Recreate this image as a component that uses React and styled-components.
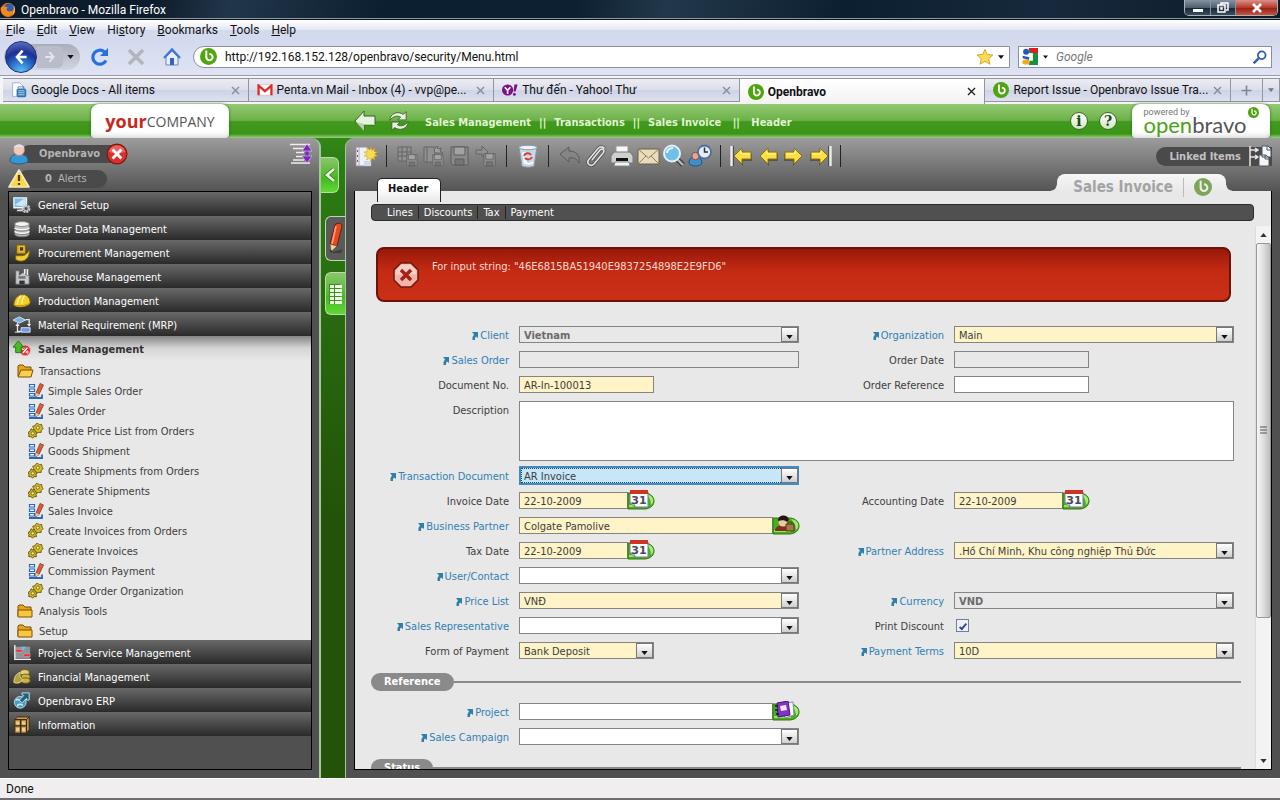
import React from "react"
import styled, { createGlobalStyle, css } from "styled-components"

const uiFont = `Roboto, "Open Sans", sans-serif`
const brandFont = `"Open Sans", "Noto Sans", sans-serif`
const appFont = `"DejaVu Sans Condensed", "DejaVu Sans", "Noto Sans", sans-serif`

const GlobalStyle = createGlobalStyle`
  *, *::before, *::after { box-sizing: border-box; }
  body { margin: 0; }
  button { padding: 0; border: 0; background: none; font: inherit; color: inherit; }
  a { color: inherit; text-decoration: none; }
  input, select, textarea { margin: 0; font: inherit; color: inherit; border-radius: 0; }
  ul { list-style: none; margin: 0; padding: 0; }
  h1, h2 { margin: 0; font-size: inherit; }
  svg { display: block; flex: none; }
`

/* ---------- icons ---------- */

const Svg = ({ size = 20, w, h, box = "0 0 20 20", children }) =>
  <svg width={w || size} height={h || size} viewBox={box} fill="none" aria-hidden="true">
    {children}
  </svg>

const BravoMark = ({ size, color = "#4fa50e", ink = "#fff" }) =>
  <Svg size={size}>
    <circle cx="10" cy="10" r="10" fill={color} />
    <path d="M7.400 3v8" stroke={ink} strokeWidth="2.300" />
    <path d="M7.400 10.600a3.700 3.700 0 1 0 3.700-3.600" stroke={ink} strokeWidth="2.300" />
  </Svg>

const FirefoxIcon = () =>
  <Svg size={16}>
    <circle cx="10" cy="10" r="9" fill="#e66a12" />
    <circle cx="11" cy="8" r="6" fill="#2d5fb4" />
    <path d="M1 7c2-2 4-2 6-1 3 0 3 2 1 3 1 3 5 4 9 1-1 6-6 9-11 7C2 15 0 11 1 7Z" fill="#f08a1c" />
    <path d="M17 4c3 4 2 10-2 13 2-4 3-8 2-13Z" fill="#f9c338" />
  </Svg>

const ReloadIcon = () =>
  <Svg>
    <path d="M16 13.500A7 7 0 1 1 14.500 5" stroke="#2670e0" strokeWidth="3.200" />
    <path d="M18 1v8h-8Z" fill="#2670e0" />
  </Svg>

const StopIcon = () =>
  <Svg>
    <path d="m3 3 14 14M17 3 3 17" stroke="#b3b5bd" strokeWidth="3.600" />
  </Svg>

const HomeIcon = () =>
  <Svg>
    <path d="M4 10v8h12v-8l-6-6Z" fill="#e6eefb" stroke="#6f88b6" />
    <path d="m2 11 8-8.500 8 8.500" stroke="#3e78dd" strokeWidth="2.400" />
    <path d="M8 11h4v7H8Z" fill="#3564ba" />
  </Svg>

const StarIcon = () =>
  <Svg size={18}>
    <path d="m10 1.500 2.600 5.700 6.100.6-4.600 4.100 1.400 6.100L10 14.800 4.500 18l1.400-6.100L1.300 7.800l6.100-.6Z" fill="#fbdc55" stroke="#d69b1e" />
  </Svg>

const GoogleIcon = () =>
  <Svg size={17}>
    <rect x="9" width="11" height="20" fill="#18913d" />
    <path d="M9 0h11v6h-8Z" fill="#df1f1f" />
    <path d="M0 0h9v20H0Z" fill="#fff" />
    <path d="M8 6h6v9H8Z" fill="#fff" />
    <circle cx="6" cy="4.500" r="3.500" fill="#2456c4" />
    <path d="m2 9 8 2-1 3-7-2Z" fill="#2456c4" />
    <ellipse cx="6" cy="16.500" rx="4.500" ry="3" fill="#f2ab1d" />
  </Svg>

const SearchIcon = () =>
  <Svg size={14}>
    <circle cx="12.500" cy="7.500" r="5.500" stroke="#2b62a8" strokeWidth="2.600" />
    <path d="m8 12-7 7" stroke="#2b62a8" strokeWidth="3.400" />
  </Svg>

const DocsIcon = () =>
  <Svg size={16}>
    <path d="M2 1h9l4 4v13H2Z" fill="#fff" stroke="#8fa9c6" />
    <rect x="7" y="8" width="12" height="11" rx="2" fill="#2f74b0" />
    <path d="M9 11h8M9 13.500h8M9 16h8" stroke="#d7e8f7" />
    <path d="M9 8V6h7v2" stroke="#2f74b0" />
  </Svg>

const GmailIcon = () =>
  <Svg w={16} h={12} box="0 0 20 15">
    <rect x="1" y="1" width="18" height="13" fill="#fff" stroke="#d9bcbc" />
    <path d="M2 14V2l8 7 8-7v12" stroke="#dd2b2b" strokeWidth="2.800" />
  </Svg>

const YahooIcon = () =>
  <Svg size={16}>
    <circle cx="7" cy="10" r="7" fill="#7b1082" />
    <path d="m3.500 6.500 3.500 4 3.500-4M7 10.500v4.500" stroke="#fff" strokeWidth="2" />
    <path d="M15.500 3h4l-2.500 9h-2.500Z" fill="#7b1082" />
    <circle cx="15.500" cy="15.500" r="1.800" fill="#7b1082" />
  </Svg>

const CloseIcon = ({ color = "#8a8c94" }) =>
  <Svg size={9} box="0 0 9 9">
    <path d="m1 1 7 7M8 1 1 8" stroke={color} strokeWidth="1.400" />
  </Svg>

const CaretDown = ({ color = "#111", w = 7 }) =>
  <Svg w={w} h={4} box="0 0 8 5">
    <path d="M0 0h8L4 5Z" fill={color} />
  </Svg>

const CaretUp = () =>
  <Svg w={7} h={4} box="0 0 8 5">
    <path d="M0 5h8L4 0Z" fill="#333" />
  </Svg>

const BigBack = () =>
  <Svg w={22} h={22} box="0 0 22 22">
    <path d="M10 1v5h11v9H10v6L1 11Z" fill="#e4f3da" stroke="#3a5f2b" />
    <path d="M10 14h11v1H10v6L2 12Z" fill="#b4cfa5" />
  </Svg>

const BigRefresh = () =>
  <Svg size={22}>
    <path d="M1.500 9.500C2 3 9 .5 14 4l2.500-2.500V9H9l2.500-2.500C8 4.500 4.500 6 1.500 9.500Z" fill="#e4f3da" stroke="#3a5f2b" strokeWidth=".8" />
    <path d="M18.500 10.500C18 17 11 19.500 6 16l-2.500 2.500V11H11l-2.500 2.500c3.500 2 7 .5 10-3Z" fill="#e4f3da" stroke="#3a5f2b" strokeWidth=".8" />
  </Svg>

const UserIcon = () =>
  <Svg w={24} h={22} box="0 0 24 22">
    <path d="M2 18c0-5 4-7 9-7s9 2 9 7c-2 4-16 4-18 0Z" fill="#3897d2" stroke="#1f5f93" />
    <circle cx="11" cy="7" r="5.500" fill="#f4c9b5" stroke="#b98070" strokeWidth=".7" />
    <path d="M5.500 5C7 0 15 0 16.500 5c-3-1.500-8-1.500-11 0Z" fill="#dfe3e8" />
  </Svg>

const LogoutIcon = () =>
  <Svg size={22}>
    <circle cx="10" cy="10" r="9" fill="#d9302a" stroke="#7d1512" />
    <path d="M2.500 8a7.700 7.700 0 0 1 15 0c-4 2-11 2-15 0Z" fill="#ee7a70" opacity=".7" />
    <path d="m6 6 8 8M14 6l-8 8" stroke="#fff" strokeWidth="2.600" />
  </Svg>

const AlertIcon = () =>
  <Svg w={22} h={19} box="0 0 22 19">
    <path d="M11 1 1 18h20Z" fill="#f9d748" stroke="#f3ecc3" strokeWidth="1.600" strokeLinejoin="round" />
    <path d="M11 6v6M11 14v2" stroke="#4d3b12" strokeWidth="2.200" />
  </Svg>

const ExpandIcon = () =>
  <Svg w={22} h={21} box="0 0 22 21">
    <path d="M0 1.500h20M3 5.500h11M6 9.500h8M6 13.500h8M3 17h11M1 20h19" stroke="#eee" strokeWidth="1.500" />
    <path d="M17 5v11" stroke="#7c22c4" strokeWidth="3" />
    <path d="m12 8 5-7 5 7ZM12 13l5 7 5-7Z" fill="#7c22c4" stroke="#e4d4f2" strokeWidth=".6" />
  </Svg>

const menuIcons = {
  setup: <Svg>
    <path d="M1 2h14v11H1Z" fill="#7ebbe4" stroke="#eef3f7" strokeWidth="1.500" />
    <path d="M2 10 12 3h2v9Z" fill="#c9e8f9" />
    <path d="M5 15h6v2H4Z" fill="#ddd" />
    <circle cx="14.500" cy="14" r="3.700" stroke="#c9ced3" strokeWidth="2.600" strokeDasharray="2.200 1" />
    <circle cx="14.500" cy="14" r="2.500" fill="#4c5258" stroke="#b7bdc2" strokeWidth="1.500" />
  </Svg>,
  data: <Svg>
    <path d="M2 4v12c1 3.500 15 3.500 16 0V4Z" fill="#c2c2c2" stroke="#6e6e6e" />
    <ellipse cx="10" cy="4.500" rx="8" ry="2.700" fill="#f3f3f3" stroke="#858585" />
    <path d="M2 8.500c1 3 15 3 16 0M2 12.500c1 3 15 3 16 0" stroke="#fafafa" strokeWidth="1.600" />
    <path d="M2 10c1 3 15 3 16 0M2 14c1 3 15 3 16 0" stroke="#777" />
  </Svg>,
  procurement: <Svg>
    <path d="M4 1h10v10H4Z" fill="#d3a81b" stroke="#775908" />
    <path d="M7 3h5v5H7Z" fill="#513e0c" stroke="#f3dc75" />
    <path d="M3 13h7c4 0 6-3 8-6 1 6-3 12-9 12-3 0-5-1-6-2Z" fill="#f0ce31" stroke="#836510" />
  </Svg>,
  warehouse: <Svg>
    <path d="M3 18V3h4v5l4-3 4 3h3v10Z" fill="#c7cacc" stroke="#606365" />
    <path d="M16 1v7M13 1v6" stroke="#eee" strokeWidth="1.800" />
    <path d="M6 9h8v3H6Z" fill="#777" />
    <path d="M7 14h6v4H7Z" fill="#333" />
  </Svg>,
  production: <Svg>
    <path d="M1 15C1 8 5 3 11 3c5 0 8 4 8 9 0 2-10 5-18 3Z" fill="#f4cf29" stroke="#8f6c06" />
    <path d="M9 4c-3 3-4 6-4 10M13 4c-2 2-3 5-3 9" stroke="#fdf0a4" strokeWidth="1.500" />
    <path d="M1 15c6 1 12 0 18-3-1 4-12 7-18 3Z" fill="#d29c0d" />
  </Svg>,
  mrp: <Svg>
    <path d="m0 4.500 7-3.500 7 3.500L7 8Z" fill="#7ab2e6" stroke="#dce8f5" />
    <path d="M14 4h4v6M5 8v9h4" stroke="#e8e8e8" strokeWidth="1.500" />
    <path d="m2.500 11 2.500-3 2.500 3ZM15.500 9l2.500 3 2-3Z" fill="#eee" />
    <path d="M9 13h10v5H9Z" fill="#7097e2" stroke="#e4ebf8" />
    <path d="M2 18h6" stroke="#eee" />
  </Svg>,
  sales: <Svg>
    <circle cx="13.500" cy="11.500" r="6" fill="#dc3338" stroke="#f1b2b2" />
    <path d="m11 14.500 5-6" stroke="#fff" strokeWidth="1.500" />
    <circle cx="11.300" cy="9.500" r="1.200" stroke="#fff" />
    <circle cx="15.700" cy="13.500" r="1.200" stroke="#fff" />
    <path d="M6 1 0 8h3v6h6V8h3Z" fill="#47bf22" stroke="#1e6e0d" />
  </Svg>,
  project: <Svg>
    <path d="M2 3h17v13H2Z" fill="#8d9498" />
    <path d="M2 1v16h18" stroke="#f2f2f2" strokeWidth="1.500" />
    <path d="M3 6h7v3H3ZM12 11h7v3h-7Z" fill="#e2343b" stroke="#f6a9ac" strokeWidth=".5" />
    <path d="M8 3h7l-3.500 4Z" fill="#69c2e6" />
  </Svg>,
  financial: <Svg>
    <ellipse cx="13" cy="5" rx="5" ry="3.200" fill="#e4cf73" stroke="#6b5713" />
    <ellipse cx="14" cy="10" rx="5" ry="3.200" fill="#cbb24a" stroke="#6b5713" />
    <ellipse cx="14" cy="14" rx="5" ry="3" fill="#cbb24a" stroke="#6b5713" />
    <path d="M1 16c0-6 3-10 7-11-1 4 0 6 3 8-2 3-6 5-10 3Z" fill="#b3a13c" stroke="#efe29e" />
  </Svg>,
  erp: <Svg>
    <circle cx="8" cy="11.500" r="6.500" fill="#4a9cba" stroke="#bfe3ef" />
    <path d="M3 9c3-2 4 1 6 0M5 16c0-3 4-3 6-1" stroke="#c9ecf4" strokeWidth="1.500" />
    <path d="M10 3V1h8v8h-3V7l-5 5-3-3 5-5Z" fill="#1f617c" stroke="#c9ecf4" />
  </Svg>,
  info: <Svg>
    <path d="M2 4h13v15H2ZM2 4l3-3h13l-3 3ZM15 4l3-3v14l-3 4Z" fill="#c19b54" stroke="#3c2a0a" />
    <path d="M8.500 4v15M2 11h13" stroke="#3c2a0a" strokeWidth="1.600" />
    <path d="M3.500 6H7v3.500H3.500ZM10 6h3.500v3.500H10ZM3.500 13H7v4H3.500ZM10 13h3.500v4H10Z" fill="#eed18d" />
  </Svg>,
}

const FolderIcon = ({ open }) =>
  <Svg w={17} h={14} box="0 0 17 14">
    <path d="M1 12V2l1-1h4l2 2h6v9Z" fill="#e9a516" stroke="#7c5009" />
    {open
      ? <path d="m1 13 3-7h12l-2 7Z" fill="#fbd04b" stroke="#7c5009" />
      : <path d="M1 6h14v7H1Z" fill="#fbc63b" stroke="#7c5009" />}
  </Svg>

const FormIcon = () =>
  <Svg w={16} h={16} box="0 0 16 16">
    <path d="M1.500 1.500h5V4h-5ZM1.500 6h5v2.500h-5ZM1.500 10.500h5V13h-5Z" fill="#f3f8ff" stroke="#2568bd" strokeWidth="1.200" />
    <path d="M1 15h13v-3.500" stroke="#2568bd" strokeWidth="1.800" />
    <path d="m7.500 14 .5-4 4-9.500 3.500 1.500-4.500 9.500Z" fill="#df5d35" stroke="#7c3b23" strokeWidth=".8" />
    <path d="m7.500 14 .5-4 3 1.500Z" fill="#f2d4a8" />
  </Svg>

const gearPath = "M8 1.500 10 0l2 2 2.500-.5.5 3L16 6l-2 2 0 2-3 0-2 1-1.500-2L5 8.500 6 6 5 3.500 7.500 3Z"

const GearsIcon = () =>
  <Svg w={16} h={16} box="0 0 17 17">
    <path d={gearPath} fill="#d8be25" stroke="#675708" strokeWidth="1" />
    <circle cx="10.500" cy="5" r="1.700" fill="#f6ecb0" stroke="#675708" strokeWidth=".8" />
    <path d="m3.500 6 1 1.500L7 7l.5 2 2 1-1 2 .5 2.500-2.500 0L5 16l-2-1.500H.800L1 12 0 10l2-1Z" fill="#cfb31e" stroke="#675708" strokeWidth="1" />
    <circle cx="5" cy="11" r="1.700" fill="#f6ecb0" stroke="#675708" strokeWidth=".8" />
  </Svg>

const Disk = ({ x = 0, y = 0, s = 1 }) =>
  <g transform={`translate(${x} ${y}) scale(${s})`} stroke="#5c5c5c">
    <path d="M1 1h17v18H3l-2-2Z" fill="#8b8b8b" />
    <path d="M4 1h11v8H4Z" fill="#a3a3a3" />
    <path d="M5 13h9v6H5Z" fill="#757575" />
  </g>

const toolIcons = {
  new: <Svg size={24} box="0 0 24 24">
    <path d="M2 3h11l4 4v15H2Z" fill="#f1f2f8" stroke="#8d92a7" />
    <path d="M5 3v19" stroke="#9aa6cf" />
    <path d="M3 7h1M3 12h1M3 17h1" stroke="#d33" strokeWidth="2" />
    <path d="M10 17h7v5h-7Z" fill="#cfd9ee" />
    <path d="m17 3 1.200 3.500L21 4l-1 3.500 3.500.5-3 2 3 2-3.500.5L21 16l-3-2-1 3.500-1.500-3.500-3 2 1-3.500-3.500-.5 3-2-3-2 3.500-.5-1-3.500L16 6Z" fill="#f9dc4b" stroke="#c29b2c" strokeWidth=".5" />
  </Svg>,
  saveGrid: <Svg size={22} box="0 0 22 22">
    <path d="M1 2h13v14H1Z" fill="#919191" stroke="#646464" />
    <path d="M1 7h13M1 11h13M5 2v14M10 2v14" stroke="#646464" />
    <Disk x={9} y={9} s={0.620} />
  </Svg>,
  saveNew: <Svg size={22} box="0 0 22 22">
    <path d="M1 2h11v15H1Z" fill="#919191" stroke="#646464" />
    <path d="M4 2v15" stroke="#646464" />
    <path d="m14 1 1 3 3-1-1 3 3 2h-8l-1-3Z" fill="#a0a0a0" stroke="#646464" />
    <Disk x={9} y={9} s={0.620} />
  </Svg>,
  save: <Svg size={22} box="0 0 22 22"><Disk x={1} y={1} /></Svg>,
  saveNext: <Svg size={22} box="0 0 22 22">
    <path d="M1 5h6V1l6 6-6 5V9H1Z" fill="#919191" stroke="#646464" />
    <Disk x={8} y={8} s={0.680} />
  </Svg>,
  trash: <Svg size={24} box="0 0 24 24">
    <path d="M3 3h18l-3 19c-2 1.500-10 1.500-12 0Z" fill="#c8d9e5" stroke="#8298a7" />
    <ellipse cx="12" cy="3.500" rx="9" ry="2.300" fill="#edf4f8" stroke="#8298a7" />
    <path d="M6 8h4l1 12H8Z" fill="#eef5f9" />
    <path d="M8 12c1-3 5-4 7-1M16 13c-1 3-5 3-7 1" stroke="#dc3b3b" strokeWidth="2" />
    <path d="M8 17c2 3 6 4 9 1" stroke="#fff" strokeWidth="1.500" />
  </Svg>,
  undo: <Svg size={22} box="0 0 22 22">
    <path d="m1 9 9-7v4c7 0 11 4 10 12-2-4-5-6-10-5v4Z" fill="#858585" stroke="#5a5a5a" />
  </Svg>,
  attach: <Svg size={24} box="0 0 24 24">
    <path d="m8 16 8-10c2-2 5 0 3.500 2.500L10 20c-3 3-8 0-5.500-4L14 4.500c2-2.500 5-2 6.500 0" stroke="#4b4b4b" strokeWidth="3.200" />
    <path d="m8 16 8-10c2-2 5 0 3.500 2.500L10 20c-3 3-8 0-5.500-4L14 4.500c2-2.500 5-2 6.500 0" stroke="#e3e3e3" strokeWidth="1.700" />
  </Svg>,
  print: <Svg size={24} box="0 0 24 24">
    <path d="M6 2h12v8H6Z" fill="#f7f7f7" stroke="#999" />
    <path d="M4 8h16l3 4v7H1v-7Z" fill="#cfcfcf" stroke="#777" />
    <path d="M6 14h12v3H6Z" fill="#111" />
    <path d="M5 18h14l1 4H4Z" fill="#f4f4f4" stroke="#888" />
  </Svg>,
  mail: <Svg w={24} h={18} box="0 0 24 18">
    <path d="M2 2h21v15H2Z" fill="#e9dbbc" stroke="#6f6145" />
    <path d="m2 2 10.500 9L23 2M2 17l8-8M23 17l-8-8" stroke="#8f7e5b" />
  </Svg>,
  find: <Svg size={24} box="0 0 24 24">
    <path d="m15 15 6 6" stroke="#3c3c3c" strokeWidth="5" />
    <path d="m15 15 6 6" stroke="#b9b9b9" strokeWidth="2.400" />
    <circle cx="10" cy="9.500" r="8" fill="#6fbfe6" stroke="#e0f1f8" strokeWidth="2" />
    <path d="M5 9c0-3 3-5 6-5" stroke="#e8f8ff" strokeWidth="2" />
  </Svg>,
  history: <Svg size={24} box="0 0 24 24">
    <path d="M1 19c0-5 3-6 6-6s7 1 7 6c-1 4-12 4-13 0Z" fill="#3a90cc" stroke="#1d527e" />
    <circle cx="7.500" cy="12" r="3.700" fill="#e9a58b" stroke="#8e4d38" />
    <circle cx="16.500" cy="8" r="6.500" fill="#e4ecf5" stroke="#4f6fa0" strokeWidth="1.800" />
    <path d="M16.500 3.500V8H20" stroke="#28303b" strokeWidth="1.500" />
  </Svg>,
}

const YellowArrow = ({ flip, bar }) =>
  <Svg w={24} h={22} box="0 0 24 22">
    <g transform={flip ? "translate(24 0) scale(-1 1)" : undefined}>
      {bar && <path d="M1.500 1v20" stroke="#ececec" strokeWidth="2.400" />}
      {bar && <path d="M3.500 1v20" stroke="#4d4d4d" />}
      <path d="M13 5v4h9v7h-9v5l-8-9Z" fill="#3b3b3b" opacity=".6" />
      <path d="M12 3v4h9v7h-9v5L4 11Z" fill="#fadf3e" stroke="#8f7213" />
      <path d="M11 6v3h9" stroke="#fff7b0" />
    </g>
  </Svg>

const LinkedIcon = () =>
  <Svg w={23} h={22} box="0 0 23 22">
    <path d="M1 1v20M1 5h7M1 12h7M6 3l3 2-3 2M6 10l3 2-3 2" stroke="#e8e8e8" strokeWidth="1.500" />
    <path d="M13 1h6l3 3v8h-9ZM10 10h7l3 3v8H10Z" fill="#f3f5f8" stroke="#4f5562" />
    <path d="M18 1v4h4M16 10v4h4" stroke="#4f5562" />
  </Svg>

const PencilIcon = () =>
  <Svg w={17} h={33} box="0 0 17 33">
    <path d="M3 31 16 27l-2 4Z" fill="#222" opacity=".5" />
    <path d="M8 3c2-3 7-2 7 1l-5 20-7-2Z" fill="#e84a1e" stroke="#691b08" />
    <path d="M9 4 5 22" stroke="#ff9b72" strokeWidth="1.700" />
    <path d="m3 22 7 2-6 6Z" fill="#edcf9d" stroke="#665030" strokeWidth=".7" />
    <path d="m3.300 27 1.800 2-1.500 1.500Z" fill="#222" />
  </Svg>

const GridIcon = () =>
  <Svg w={15} h={22} box="0 0 15 22">
    <path d="M1 1h11v20H1Z" fill="#3c8e1d" />
    <path d="M2 2h4v3H2ZM2 6h4v3H2ZM2 10h4v3H2ZM2 14h4v3H2ZM2 18h4v3H2ZM7 2h7v3H7ZM7 6h7v3H7ZM7 10h7v3H7ZM7 14h7v3H7ZM7 18h7v3H7Z" fill="#eef8e6" />
  </Svg>

const ChevronIcon = () =>
  <Svg w={13} h={14} box="0 0 13 14">
    <path d="m11 1-7 6 7 6" stroke="#2e7a12" strokeWidth="4" />
    <path d="m11 1-7 6 7 6" stroke="#eef8e6" strokeWidth="2.600" />
  </Svg>

const ErrorIcon = () =>
  <Svg size={26} box="0 0 26 26">
    <path d="M8 1h10l7 7v10l-7 7H8l-7-7V8Z" fill="#efb5ab" stroke="#76170a" strokeWidth="1.500" />
    <path d="M8.500 2.500h9l6 6v4h-21v-4Z" fill="#f6cfc8" />
    <path d="m8 8 10 10M18 8 8 18" stroke="#a32212" strokeWidth="3.400" />
  </Svg>

const LinkArrow = () =>
  <Svg w={7} h={8} box="0 0 7 8">
    <path d="M1 0h6v6L5 4.500 4 6v2H1.500V5L3 2.500Z" fill="#2f7fab" />
  </Svg>

const GreenCap = ({ children }) =>
  <Svg w={28} h={20} box="0 0 28 20">
    <path d="M1 3h17c12 1 12 15 0 16H1Z" fill="#46b01f" stroke="#33760f" />
    <path d="M19 4c8 1 9 8 5 11 0-5-2-8-5-11Z" fill="#a6ec7a" />
    <path d="M2 16h17" stroke="#95e35f" strokeWidth="2" />
    {children}
  </Svg>

const calendarIcon = <GreenCap>
  <path d="M3 2h18v15H8l-5-4Z" fill="#fbfbfe" stroke="#7c7f99" />
  <path d="M3 0h18v4H3Z" fill="#cf3321" />
  <path d="M3 13c3 0 5 1 5 4" stroke="#6d6fae" />
  <text x="12" y="14" textAnchor="middle" fontFamily="DejaVu Sans, sans-serif" fontSize="11" fontWeight="bold" fill="#49495a">31</text>
</GreenCap>

const partnerIcon = <GreenCap>
  <path d="M3 15c1-4 5-5 9-5l4 6H3Z" fill="#842e21" />
  <circle cx="11" cy="7" r="4.500" fill="#f1c7a4" />
  <path d="M6 6c0-7 10-7 11-1l-2 2c-2-2-5-2-9-1Z" fill="#23150f" />
  <path d="M14 9h8v7h-8Z" fill="#a3764b" stroke="#593718" />
  <path d="M16 9V7h4v2" stroke="#593718" />
</GreenCap>

const projectIcon = <GreenCap>
  <path d="m12 2 9-1 1 13-9 3Z" fill="#f6f4fb" stroke="#8a86a0" />
  <path d="m5 2 11-2 2 14-12 2Z" fill="#8235c3" stroke="#45157a" />
  <path d="m8 5 6-1 1 5-6 1Z" fill="#efe3fa" />
  <path d="M3 5h3M3 9h3M4 13h3" stroke="#22122f" strokeWidth="1.500" />
</GreenCap>

/* ---------- browser window ---------- */

const Window = styled.div`
  display: flex;
  flex-direction: column;
  height: 100vh;
  overflow: hidden;
  font-family: ${uiFont};
  font-size: 12px;
  color: #111;
  background: #f0eeee;
`

const TitleBar = styled.header`
  display: flex;
  justify-content: space-between;
  height: 20px;
  flex: none;
  border-bottom: 1px solid #0a121c;
  box-shadow: inset 0 -1px #8d979f;
  background: linear-gradient(100deg, #0d1c2c 0%, #0d1c2c 12%, #22364a 18%, #0c1f30 30%, #0d2031 45%, #22384a 52%, #0c1f30 66%, #17293c 82%, #0d1a28 100%);
  color: #fff;
`

const Title = styled.h1`
  display: flex;
  align-items: center;
  gap: 5px;
  font-weight: 400;
`

const WindowButtons = styled.div`
  display: flex;
  height: 16px;
  margin-right: 2px;
  border: 1px solid #a9b2ba;
  border-top: 0;
  border-radius: 0 0 5px 5px;
  overflow: hidden;
`

const WindowButton = styled.button`
  display: grid;
  place-items: center;
  width: ${p => (p.$close ? 42 : 25)}px;
  border-left: 1px solid #8b959e;
  background: ${p =>
    p.$close
      ? "linear-gradient(#d9918a, #b8392a 50%, #8f1d12 51%, #c9533c)"
      : "linear-gradient(#8593a1, #4f5f70 50%, #162534 51%, #3a4d60)"};

  &:first-child {
    border-left: 0;
  }
`

const MenuBar = styled.nav`
  display: flex;
  align-items: center;
  gap: 12px;
  height: 20px;
  flex: none;
  padding: 0 6px;
  background: linear-gradient(#fff, #e3e7f4 50%, #d4daee 51%);
`

const NavBar = styled.div`
  display: flex;
  align-items: center;
  height: 36px;
  flex: none;
  padding: 0 8px 2px 4px;
  background: linear-gradient(#d4daee, #dfe3f3);
  border-bottom: 1px solid #9a9ca6;
`

const Keyhole = styled.div`
  display: flex;
  align-items: center;
  height: 26px;
  width: 76px;
  margin-right: 2px;
  border-radius: 14px;
  background: linear-gradient(#a9adbb, #d3d6e0);
`

const BackButton = styled.button`
  display: grid;
  place-items: center;
  width: 32px;
  height: 32px;
  margin-left: 1px;
  flex: none;
  border-radius: 50%;
  border: 1px solid #1f2f74;
  background: radial-gradient(circle at 50% 100%, #5cc4f6, #1f55b8 45%, #1d2f93 60%, #6f86cc);
`

const ForwardButton = styled.button`
  display: grid;
  place-items: center;
  width: 26px;
  height: 22px;
  border-radius: 0 5px 5px 0;
  background: #b9bcc9;
`

const NavButton = styled.button`
  display: grid;
  place-items: center;
  width: 36px;
  height: 24px;
  flex: none;
`

const CaretButton = styled.button`
  display: grid;
  place-items: center;
  width: 14px;
  height: 20px;
  flex: none;
`

const AddressBox = styled.div`
  display: flex;
  align-items: center;
  flex: 1;
  height: 22px;
  margin: 0 8px 0 3px;
  padding: 0 1px 0 6px;
  border: 1px solid #8c8f9c;
  border-radius: 11px 0 0 11px;
  background: #fff;
`

const SearchBox = styled(AddressBox)`
  flex: 0 1 254px;
  margin: 0;
  padding: 0 4px 0 2px;
  border-radius: 0;
`

const BareInput = styled.input`
  flex: 1;
  min-width: 0;
  height: 20px;
  padding: 0 8px;
  border: 0;
  outline: 0;
  background: transparent;

  &::placeholder {
    color: #777;
    font-style: italic;
  }
`

const SearchInput = styled(BareInput)`
  padding: 0 4px;
`

const TabStrip = styled.div`
  display: flex;
  align-items: flex-start;
  height: 28px;
  flex: none;
  padding: 2px 0 0 3px;
  background: #f4f3f5;
`

const tabFace = css`
  border: 1px solid #9294a2;
  border-width: 1px 1px 1px 0;
  background: linear-gradient(#ebecf3, #dcdeea 50%, #cdd3e6 51%, #dde1ee);
`

const BrowserTab = styled.div`
  display: flex;
  align-items: center;
  gap: 4px;
  flex: 1;
  min-width: 0;
  height: 24px;
  padding: 0 8px;
  ${tabFace}
  ${p =>
    p.$active &&
    css`
      height: 26px;
      font-weight: 700;
      border-bottom: 0;
      background: linear-gradient(#fff, #f2f2f3);
    `}

  span {
    flex: 1;
    min-width: 0;
    overflow: hidden;
    white-space: nowrap;
  }
`

const TabTool = styled.button`
  display: grid;
  place-items: center;
  width: ${p => p.$w}px;
  height: 24px;
  flex: none;
  color: #777;
  ${tabFace}
`

const StatusBar = styled.footer`
  height: 22px;
  flex: none;
  padding: 0 6px;
  line-height: 20px;
  border-top: 1px solid #fff;
  border-bottom: 2px solid #6d6d72;
  background: #f0eeee;
`

/* ---------- application ---------- */

const AppArea = styled.div`
  display: flex;
  flex-direction: column;
  flex: 1;
  min-height: 0;
  background: linear-gradient(#3b9618, #2c7c14 60px, #235208 420px);
  font-family: ${appFont};
  font-size: 11px;
  color: #3d3d3d;
`

const TopBar = styled.div`
  display: flex;
  align-items: center;
  height: 34px;
  flex: none;
  background: linear-gradient(#94c974, #6cb148 48%, #41991d 52%, #3c9419 88%, #9bd184);
`

const Plaque = styled.div`
  display: flex;
  justify-content: center;
  width: 138px;
  height: 34px;
  flex: none;
  background: #fff;
  border-radius: 8px 8px 4px 4px;
  box-shadow: inset 0 -4px 6px -3px #ccc, 0 0 3px #2c6d12;
`

const Company = styled(Plaque)`
  align-items: center;
  margin-left: 91px;
  font-family: ${brandFont};
  font-size: 14px;
  color: #555;

  b {
    font-size: 18px;
    color: #c4291c;
  }
`

const Powered = styled(Plaque)`
  gap: 1px;
  margin: 0 10px 0 4px;
  padding: 3px 8px 0;
`

const Wordmark = styled.div`
  display: flex;
  flex-direction: column;
  font-family: Lato, sans-serif;
  font-size: 22px;
  line-height: 16px;
  color: #555;

  small {
    font-family: ${uiFont};
    font-size: 9px;
    line-height: 10px;
    color: #777;
  }

  span {
    color: #4aa216;
  }
`

const BarTools = styled.div`
  display: flex;
  gap: 12px;
  margin-left: 125px;
`

const Crumbs = styled.nav`
  display: flex;
  flex: 1;
  gap: 8px;
  margin-left: 15px;
  padding-top: 3px;
  font-weight: 700;
  color: #e2f5d3;
  white-space: nowrap;
`

const RoundButton = styled.button`
  width: 18px;
  height: 18px;
  margin-right: 11px;
  border-radius: 50%;
  border: 1px solid #39701f;
  background: linear-gradient(#fff, #cfe6c0);
  color: #27471a;
  font: 700 14px/14px "DejaVu Serif", serif;
`

const Body = styled.div`
  display: flex;
  flex: 1;
  min-height: 0;
`

const panelFace = css`
  background: linear-gradient(#9c9c9c, #505050 56px);
`

const Sidebar = styled.aside`
  display: flex;
  flex-direction: column;
  flex: 0 0 321px;
  padding: 3px 7px 8px 8px;
  border-right: 2px solid #a6c99b;
  border-radius: 0 9px 0 0;
  ${panelFace}
`

const UserRow = styled.div`
  display: flex;
  align-items: center;
  height: 25px;
`

const Pill = styled.span`
  display: flex;
  align-items: center;
  gap: 6px;
  height: 18px;
  padding: 0 20px 0 ${p => p.$indent || 19}px;
  margin-left: -12px;
  border-radius: 9px;
  background: #4a4a4a;
  color: #b4b4b4;
`

const PillLink = styled.a`
  font-weight: 700;
`

const Overlap = styled.button`
  margin-left: -14px;
`

const Push = styled.button`
  margin-left: auto;
`

const Above = styled.span`
  position: relative;
  z-index: 1;
`

const MenuBox = styled.ul`
  flex: 1;
  min-height: 0;
  border: 1px solid #000;
  overflow: hidden;
`

const MenuGroup = styled.a`
  display: flex;
  align-items: center;
  gap: 7px;
  height: 24px;
  padding: 2px 4px 0;
  color: #fff;
  background: linear-gradient(#696969, #2a2a2a);
  ${p =>
    p.$open &&
    css`
      color: #333;
      font-weight: 700;
      background: linear-gradient(#858585, #d4d4d4 50%, #e8e8e8);
    `}

  svg {
    width: 18px;
    height: 18px;
  }
`

const SubMenu = styled.ul`
  background: #e8e8e8;
`

const MenuEntry = styled.a`
  display: flex;
  align-items: center;
  gap: ${p => (p.$nested ? 4 : 5)}px;
  height: 20px;
  padding: 2px 0 0 ${p => (p.$nested ? 19 : 8)}px;
`

const Strip = styled.div`
  display: flex;
  flex-direction: column;
  align-items: flex-end;
  flex: 0 0 24px;
`

const StripTab = styled.button`
  display: grid;
  place-items: center;
  width: 20px;
  height: ${p => p.$h}px;
  margin-top: ${p => p.$top}px;
  border: 1px solid #b9dcaa;
  border-right: 0;
  border-radius: 6px 0 0 6px;
  background: ${p => (p.$on ? "#5a5a5a" : "linear-gradient(#8cc56e, #46b820 60%, #62d838)")};
`

const CollapseTab = styled(StripTab)`
  width: 18px;
  align-self: flex-start;
  border: 1px solid #b9dcaa;
  border-left: 0;
  border-radius: 0 6px 6px 0;
`

const Main = styled.main`
  display: flex;
  flex-direction: column;
  flex: 1;
  min-width: 0;
  padding: 0 8px 8px;
  border-left: 1px solid #a6c99b;
  border-radius: 9px 0 0 0;
  ${panelFace}
`

const Toolbar = styled.div`
  display: flex;
  align-items: center;
  gap: 2px;
  height: 36px;
  flex: none;
`

const ToolButton = styled.button`
  display: grid;
  place-items: center;
  width: 24px;
  height: 26px;
  flex: none;
`

const Divider = styled.span`
  width: 1px;
  height: 22px;
  margin: 0 7px 0 6px;
  background: #222;
`

const LinkedItems = styled.a`
  display: flex;
  align-items: center;
  height: 19px;
  margin-left: auto;
  padding-left: 13px;
  gap: 8px;
  border-radius: 10px 0 0 10px;
  background: #4a4a4a;
  color: #c2c2c2;
  font-weight: 700;
`

/* The tab row hangs over the top edge of the panel below it. */
const TabRow = styled.div`
  display: flex;
  align-items: flex-end;
  justify-content: space-between;
  position: relative;
  z-index: 1;
  height: 30px;
  margin-bottom: -13px;
  padding: 0 46px 2px 23px;
  flex: none;
`

const PageTab = styled.a`
  height: 24px;
  padding: 0 12px 0 10px;
  line-height: 20px;
  border: 1px solid #222;
  border-bottom: 0;
  border-radius: 5px 5px 0 0;
  background: linear-gradient(#fff, #fff 40%, #e8e8e8);
  color: #111;
  font-weight: 700;
`

const TitleTab = styled.div`
  display: flex;
  align-items: center;
  align-self: flex-start;
  position: relative;
  gap: 10px;
  height: 26px;
  padding: 0 14px 0 16px;
  border-radius: 8px 8px 0 0;
  background: linear-gradient(#f6f6f6, #e8e8e8 70%);

  &::before,
  &::after {
    content: "";
    position: absolute;
    top: 11px;
    width: 6px;
    height: 6px;
  }

  &::before {
    right: 100%;
    background: radial-gradient(circle at 0 0, transparent 5px, #e8e8e8 6px);
  }

  &::after {
    left: 100%;
    background: radial-gradient(circle at 100% 0, transparent 5px, #e8e8e8 6px);
  }

  h2 {
    font-size: 15px;
    color: #a3a3a3;
  }

  i {
    width: 1px;
    height: 19px;
    background: #bbb;
  }
`

const Panel = styled.section`
  display: flex;
  flex-direction: column;
  flex: 1;
  min-height: 0;
  padding-top: 13px;
  border: solid #000;
  border-width: 0 1px 1px;
  background: #e8e8e8;
`

const SubTabs = styled.nav`
  display: flex;
  align-items: center;
  height: 17px;
  flex: none;
  margin: 0 17px 0 16px;
  padding-left: 10px;
  border: 1px solid #2c2c2c;
  border-radius: 4px;
  background: #505050;
  color: #fff;

  a {
    padding: 0 5px;
    line-height: 13px;
    border-left: 1px solid #222;
  }

  a:first-child {
    border-left: 0;
  }
`

const ScrollArea = styled.div`
  display: flex;
  flex: 1;
  min-height: 0;
  margin-top: 5px;
`

const Form = styled.form`
  flex: 1;
  min-width: 0;
  overflow: hidden;
  padding: 21px 14px 0 16px;
`

const ScrollTrack = styled.div`
  display: flex;
  flex-direction: column;
  width: 16px;
  background: #f3f3f3;
  border-left: 1px solid #ddd;
`

const ScrollButton = styled.button`
  display: grid;
  place-items: center;
  height: 17px;
  flex: none;
`

const ScrollThumb = styled.div`
  display: grid;
  place-items: center;
  flex: 0 0 69%;
  margin-bottom: auto;
  border: 1px solid #999;
  border-radius: 2px;
  background: linear-gradient(90deg, #f7f7f7, #dedede 50%, #bdbdbd);
`

const ErrorBox = styled.div`
  display: flex;
  gap: 13px;
  height: 55px;
  margin: 0 10px 20px 5px;
  padding: 13px 15px;
  border: 2px solid #6c1206;
  border-radius: 8px;
  background: linear-gradient(#98190a, #c52b14 45%, #c93016);
  color: #fbd9cf;

  p {
    margin: -2px 0 0;
  }
`

const FieldGrid = styled.div`
  display: grid;
  grid-template-columns: 138px minmax(0, 280px) 1fr minmax(0, 280px);
  grid-auto-rows: minmax(25px, auto);
  column-gap: 10px;
  align-items: center;
  padding-right: 7px;
`

const Label = styled.label`
  display: flex;
  align-items: center;
  justify-content: flex-end;
  align-self: start;
  gap: 2px;
  height: 25px;
  padding-top: 2px;
  grid-column: ${p => (p.$right ? 3 : 1)};
  color: ${p => (p.$link ? "#2f80b5" : "#3d3d3d")};
  white-space: nowrap;
`

const tones = {
  plain: "#fff",
  required: "#fff3c8",
  locked: "#e8e8e8",
  focus: "#c8e6f8",
}

const control = css`
  width: 100%;
  height: 17px;
  padding: 1px 4px 0;
  border: 1px solid #848484;
  outline: 0;
  background: ${p => tones[p.$tone || "plain"]};
  opacity: 1;
  ${p => p.$tone === "locked" && "font-weight: 700; color: #6b6b6b;"}
`

const TextInput = styled.input`
  ${control}
`

const TextBox = styled.textarea`
  ${control}
  display: block;
  height: 60px;
  margin: 4px 0 2px;
  grid-column: 2 / -1;
  resize: none;
`

const Stack = styled.div`
  display: grid;
  width: ${p => (p.$short ? "135px" : "100%")};

  > * {
    grid-area: 1 / 1;
  }
`

const Select = styled.select`
  ${control}
  appearance: none;
  ${p =>
    p.$tone === "focus" &&
    css`
      height: 19px;
      padding: 1px 3px 0;
      border: 2px solid #3f8cc4;
      outline: 1px dotted #16486c;
      outline-offset: -3px;
    `}
`

const SelectArrow = styled.span`
  display: grid;
  place-items: center;
  place-self: center end;
  width: 17px;
  height: 15px;
  margin-right: 1px;
  padding-top: 4px;
  border: 1px solid #777;
  background: linear-gradient(#fff, #cfcfcf);
  pointer-events: none;
`

const Joined = styled.div`
  display: flex;
  align-items: center;
  width: ${p => (p.$short ? "136px" : "calc(100% + 1px)")};

  button {
    flex: none;
    margin-left: -1px;
    margin-top: -2px;
  }
`

const Checkbox = styled.input`
  appearance: none;
  display: grid;
  place-items: center;
  width: 13px;
  height: 13px;
  margin-left: 2px;
  border: 1px solid #70809a;
  background: #eef0f6;

  &:checked::before {
    content: "";
    width: 4px;
    height: 8px;
    border: solid #39479b;
    border-width: 0 2px 2px 0;
    transform: rotate(40deg);
  }
`

const SectionHead = styled.h2`
  display: flex;
  align-items: center;
  height: 18px;
  margin: 10px 0 8px;
  color: #fff;

  span {
    padding: 0 13px;
    line-height: 18px;
    border-radius: 9px;
    background: #8a8a8a;
  }

  &::after {
    content: "";
    flex: 1;
    height: 2px;
    background: #8a8a8a;
  }
`

/* ---------- data ---------- */

const browserTabs = [
  { icon: <DocsIcon />, text: "Google Docs - All items" },
  { icon: <GmailIcon />, text: "Penta.vn Mail - Inbox (4) - vvp@pe..." },
  { icon: <YahooIcon />, text: "Thư đến - Yahoo! Thư" },
  { icon: <BravoMark size={16} />, text: "Openbravo", active: true },
  { icon: <BravoMark size={16} />, text: "Report Issue - Openbravo Issue Tra..." },
]

const transactions = [
  ["form", "Simple Sales Order"],
  ["form", "Sales Order"],
  ["gears", "Update Price List from Orders"],
  ["form", "Goods Shipment"],
  ["gears", "Create Shipments from Orders"],
  ["gears", "Generate Shipments"],
  ["form", "Sales Invoice"],
  ["gears", "Create Invoices from Orders"],
  ["gears", "Generate Invoices"],
  ["form", "Commission Payment"],
  ["gears", "Change Order Organization"],
]

const menu = [
  ["setup", "General Setup"],
  ["data", "Master Data Management"],
  ["procurement", "Procurement Management"],
  ["warehouse", "Warehouse Management"],
  ["production", "Production Management"],
  ["mrp", "Material Requirement (MRP)"],
  ["sales", "Sales Management"],
  ["project", "Project & Service Management"],
  ["financial", "Financial Management"],
  ["erp", "Openbravo ERP"],
  ["info", "Information"],
]

const tools = [
  ["new", "New"], null,
  ["saveGrid", "Save and grid"], ["saveNew", "Save and new"], ["save", "Save"], ["saveNext", "Save and next"], null,
  ["trash", "Delete"], null,
  ["undo", "Undo"], ["attach", "Attachments"], ["print", "Print"], ["mail", "Email"], ["find", "Find"], ["history", "Audit"], null,
]

const headerFields = [
  { label: "Client", link: true, type: "select", value: "Vietnam", tone: "locked" },
  { label: "Organization", link: true, type: "select", value: "Main", tone: "required", right: true },
  { label: "Sales Order", link: true, type: "text", tone: "locked" },
  { label: "Order Date", type: "text", tone: "locked", right: true, short: true },
  { label: "Document No.", type: "text", value: "AR-In-100013", tone: "required", short: true },
  { label: "Order Reference", type: "text", right: true, short: true },
  { label: "Description", type: "area" },
  { label: "Transaction Document", link: true, type: "select", value: "AR Invoice", tone: "focus" },
  { label: "Invoice Date", type: "date", value: "22-10-2009", tone: "required", short: true },
  { label: "Accounting Date", type: "date", value: "22-10-2009", tone: "required", right: true, short: true },
  { label: "Business Partner", link: true, type: "partner", value: "Colgate Pamolive", tone: "required" },
  { label: "Tax Date", type: "date", value: "22-10-2009", tone: "required", short: true },
  { label: "Partner Address", link: true, type: "select", value: ".Hồ Chí Minh, Khu công nghiệp Thủ Đức", tone: "required", right: true },
  { label: "User/Contact", link: true, type: "select" },
  { label: "Price List", link: true, type: "select", value: "VNĐ", tone: "required" },
  { label: "Currency", link: true, type: "select", value: "VND", tone: "locked", right: true },
  { label: "Sales Representative", link: true, type: "select" },
  { label: "Print Discount", type: "check", right: true },
  { label: "Form of Payment", type: "select", value: "Bank Deposit", tone: "required", short: true },
  { label: "Payment Terms", link: true, type: "select", value: "10D", tone: "required", right: true },
]

const referenceFields = [
  { label: "Project", link: true, type: "project" },
  { label: "Sales Campaign", link: true, type: "select" },
]

const pickers = { date: calendarIcon, partner: partnerIcon, project: projectIcon }

/* ---------- components ---------- */

const Control = ({ id, type, value = "", tone, short, label }) => {
  if (type === "area") return <TextBox id={id} />
  if (type === "check") return <Checkbox id={id} type="checkbox" defaultChecked />
  if (type === "select") {
    return (
      <Stack $short={short}>
        <Select id={id} $tone={tone} defaultValue={value}>
          <option value={value}>{value}</option>
        </Select>
        <SelectArrow><CaretDown /></SelectArrow>
      </Stack>
    )
  }
  if (pickers[type]) {
    return (
      <Joined $short={short}>
        <TextInput id={id} $tone={tone} defaultValue={value} />
        <button type="button" aria-label={`Choose ${label}`}>{pickers[type]}</button>
      </Joined>
    )
  }
  return (
    <Stack $short={short}>
      <TextInput id={id} $tone={tone} defaultValue={value} readOnly={tone === "locked"} />
    </Stack>
  )
}

const Fields = ({ items }) =>
  <FieldGrid>
    {items.map(f => {
      const id = f.label.toLowerCase().replace(/\W+/g, "-")
      return (
        <React.Fragment key={id}>
          <Label htmlFor={id} $link={f.link} $right={f.right}>
            {f.link && <LinkArrow />}
            {f.label}
          </Label>
          <Control id={id} {...f} />
        </React.Fragment>
      )
    })}
  </FieldGrid>

const BrowserChrome = () =>
  <>
    <TitleBar>
      <Title><FirefoxIcon />Openbravo - Mozilla Firefox</Title>
      <WindowButtons>
        <WindowButton aria-label="Minimize">
          <Svg w={12} h={10} box="0 0 12 10"><path d="M1 6h10v3H1Z" fill="#fff" /></Svg>
        </WindowButton>
        <WindowButton aria-label="Restore">
          <Svg w={12} h={11} box="0 0 12 11"><path d="M4 3V1h7v7H9M1 3h7v7H1ZM4 6h1v1H4Z" stroke="#fff" strokeWidth="1.500" /></Svg>
        </WindowButton>
        <WindowButton $close aria-label="Close">
          <Svg w={12} h={10} box="0 0 12 10"><path d="m2 1 8 8M10 1 2 9" stroke="#fff" strokeWidth="2.600" /></Svg>
        </WindowButton>
      </WindowButtons>
    </TitleBar>
    <MenuBar>
      <a href="#file"><u>F</u>ile</a>
      <a href="#edit"><u>E</u>dit</a>
      <a href="#view"><u>V</u>iew</a>
      <a href="#history">Hi<u>s</u>tory</a>
      <a href="#bookmarks"><u>B</u>ookmarks</a>
      <a href="#tools"><u>T</u>ools</a>
      <a href="#help"><u>H</u>elp</a>
    </MenuBar>
    <NavBar>
      <Keyhole>
        <BackButton aria-label="Back">
          <Svg size={16}><path d="m12 2-7 8 7 8M5 10h12" stroke="#fff" strokeWidth="3.200" /></Svg>
        </BackButton>
        <ForwardButton aria-label="Forward">
          <Svg size={12}><path d="m9 2 7 8-7 8M2 10h13" stroke="#e3e5ec" strokeWidth="3.200" /></Svg>
        </ForwardButton>
        <CaretButton aria-label="Recent pages"><CaretDown /></CaretButton>
      </Keyhole>
      <NavButton aria-label="Reload"><ReloadIcon /></NavButton>
      <NavButton aria-label="Stop"><StopIcon /></NavButton>
      <NavButton aria-label="Home"><HomeIcon /></NavButton>
      <AddressBox>
        <BravoMark size={17} />
        <BareInput aria-label="Address" defaultValue="http://192.168.152.128/openbravo/security/Menu.html" />
        <StarIcon />
        <CaretButton aria-label="Show history"><CaretDown w={6} /></CaretButton>
      </AddressBox>
      <SearchBox>
        <GoogleIcon />
        <CaretButton aria-label="Search engines"><CaretDown w={5} /></CaretButton>
        <SearchInput aria-label="Search" placeholder="Google" />
        <SearchIcon />
      </SearchBox>
    </NavBar>
    <TabStrip>
      {browserTabs.map(t =>
        <BrowserTab key={t.text} $active={t.active}>
          {t.icon}
          <span>{t.text}</span>
          <button aria-label="Close tab"><CloseIcon color={t.active ? "#222" : undefined} /></button>
        </BrowserTab>
      )}
      <TabTool $w={32} aria-label="New tab">
        <Svg size={11}><path d="M10 1v18M1 10h18" stroke="#85878f" strokeWidth="3" /></Svg>
      </TabTool>
      <TabTool $w={17} aria-label="List tabs"><CaretDown color="#777" w={6} /></TabTool>
    </TabStrip>
  </>

const SideMenu = () =>
  <Sidebar>
    <UserRow>
      <Above><UserIcon /></Above>
      <Pill><PillLink href="#user">Openbravo</PillLink></Pill>
      <Overlap aria-label="Log out"><LogoutIcon /></Overlap>
      <Push aria-label="Expand menu"><ExpandIcon /></Push>
    </UserRow>
    <UserRow>
      <Above><AlertIcon /></Above>
      <Pill $indent={27}><b>0</b><a href="#alerts">Alerts</a></Pill>
    </UserRow>
    <MenuBox>
      {menu.map(([icon, text]) =>
        <li key={icon}>
          <MenuGroup href={`#${icon}`} $open={icon === "sales"}>
            {menuIcons[icon]}{text}
          </MenuGroup>
          {icon === "sales" &&
            <SubMenu>
              <li><MenuEntry href="#transactions"><FolderIcon open />Transactions</MenuEntry></li>
              {transactions.map(([kind, name]) =>
                <li key={name}>
                  <MenuEntry href="#entry" $nested>
                    {kind === "form" ? <FormIcon /> : <GearsIcon />}
                    {name}
                  </MenuEntry>
                </li>
              )}
              <li><MenuEntry href="#analysis"><FolderIcon />Analysis Tools</MenuEntry></li>
              <li><MenuEntry href="#setup-folder"><FolderIcon />Setup</MenuEntry></li>
            </SubMenu>}
        </li>
      )}
    </MenuBox>
  </Sidebar>

const App = () =>
  <Window>
    <GlobalStyle />
    <BrowserChrome />
    <AppArea>
      <TopBar>
        <Company><b>your</b>COMPANY</Company>
        <BarTools>
          <button aria-label="Back"><BigBack /></button>
          <button aria-label="Refresh"><BigRefresh /></button>
        </BarTools>
        <Crumbs>
          <a href="#sales">Sales Management</a>||
          <a href="#transactions">Transactions</a>||
          <a href="#invoice">Sales Invoice</a>&nbsp;||&nbsp;
          <a href="#header">Header</a>
        </Crumbs>
        <RoundButton aria-label="About">i</RoundButton>
        <RoundButton aria-label="Help">?</RoundButton>
        <Powered>
          <Wordmark>
            <small>powered by</small>
            <div><span>open</span>bravo</div>
          </Wordmark>
          <BravoMark size={11} />
        </Powered>
      </TopBar>
      <Body>
        <SideMenu />
        <Strip>
          <CollapseTab $h={36} $top={19} aria-label="Collapse menu"><ChevronIcon /></CollapseTab>
          <StripTab $h={45} $top={23} $on aria-label="Form view"><PencilIcon /></StripTab>
          <StripTab $h={43} $top={11} aria-label="Grid view"><GridIcon /></StripTab>
        </Strip>
        <Main>
          <Toolbar>
            {tools.map((t, i) =>
              t
                ? <ToolButton key={t[0]} aria-label={t[1]}>{toolIcons[t[0]]}</ToolButton>
                : <Divider key={i} />
            )}
            <ToolButton aria-label="First"><YellowArrow bar /></ToolButton>
            <ToolButton aria-label="Previous"><YellowArrow /></ToolButton>
            <ToolButton aria-label="Next"><YellowArrow flip /></ToolButton>
            <ToolButton aria-label="Last"><YellowArrow flip bar /></ToolButton>
            <Divider />
            <LinkedItems href="#linked">Linked Items<LinkedIcon /></LinkedItems>
          </Toolbar>
          <TabRow>
            <PageTab href="#header">Header</PageTab>
            <TitleTab>
              <h2>Sales Invoice</h2>
              <i />
              <BravoMark size={18} color="#7ba557" ink="#ededed" />
            </TitleTab>
          </TabRow>
          <Panel>
            <SubTabs>
              <a href="#lines">Lines</a>
              <a href="#discounts">Discounts</a>
              <a href="#tax">Tax</a>
              <a href="#payment">Payment</a>
            </SubTabs>
            <ScrollArea>
              <Form>
                <ErrorBox role="alert">
                  <ErrorIcon />
                  <p>For input string: "46E6815BA51940E9837254898E2E9FD6"</p>
                </ErrorBox>
                <Fields items={headerFields} />
                <SectionHead><span>Reference</span></SectionHead>
                <Fields items={referenceFields} />
                <SectionHead><span>Status</span></SectionHead>
              </Form>
              <ScrollTrack>
                <ScrollButton aria-label="Scroll up"><CaretUp /></ScrollButton>
                <ScrollThumb>
                  <Svg w={7} h={8} box="0 0 7 8"><path d="M0 1h7M0 4h7M0 7h7" stroke="#555" /></Svg>
                </ScrollThumb>
                <ScrollButton aria-label="Scroll down"><CaretDown color="#333" /></ScrollButton>
              </ScrollTrack>
            </ScrollArea>
          </Panel>
        </Main>
      </Body>
    </AppArea>
    <StatusBar>Done</StatusBar>
  </Window>

export default App
